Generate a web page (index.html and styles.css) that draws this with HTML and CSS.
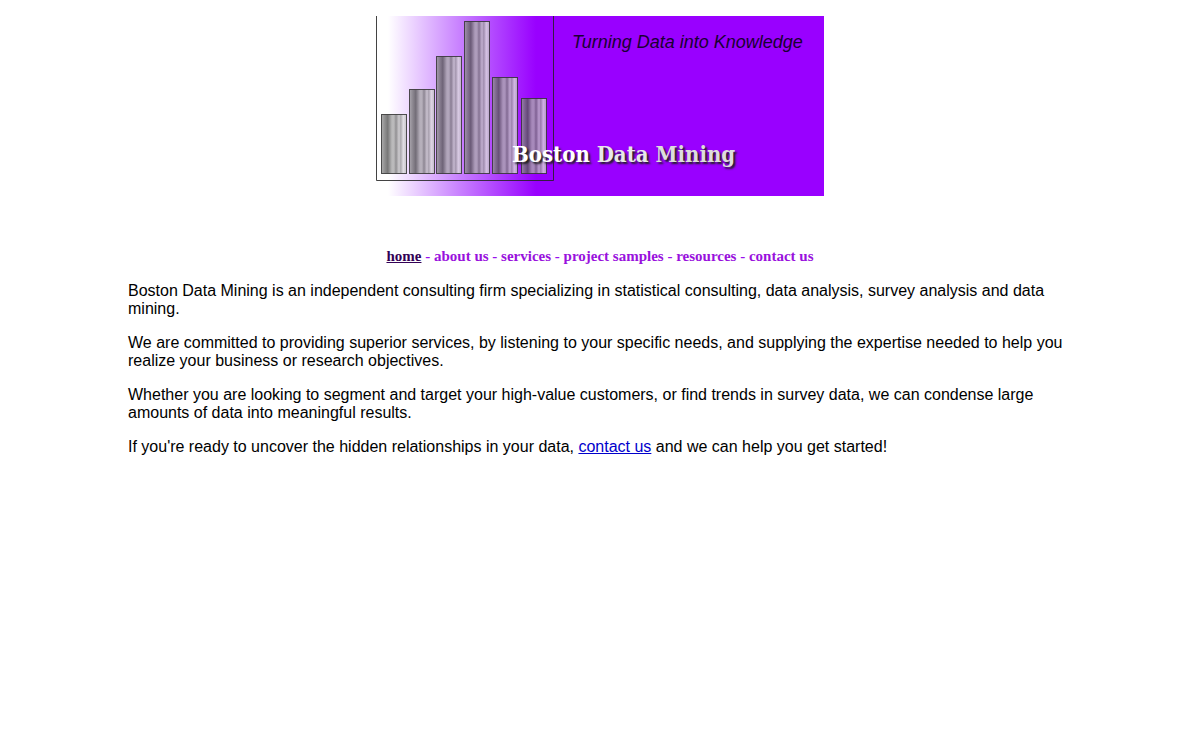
FILE: index.html
```
<!DOCTYPE html>
<html lang="en">
<head>
    <meta charset="utf-8">
    <title>Boston Data Mining</title>
    <link rel="stylesheet" href="styles.css">
</head>
<body>
    <header class="banner">
        <svg class="chart" width="178" height="180" viewBox="0 0 178 180" aria-hidden="true">
            <defs>
                <linearGradient id="metal">
                    <stop offset="0" stop-color="#999"/>
                    <stop offset="0.12" stop-color="#777"/>
                    <stop offset="0.25" stop-color="#555"/>
                    <stop offset="0.42" stop-color="#aaa"/>
                    <stop offset="0.5" stop-color="#aaa"/>
                    <stop offset="0.58" stop-color="#777"/>
                    <stop offset="0.7" stop-color="#c4c4c4"/>
                    <stop offset="0.77" stop-color="#999"/>
                    <stop offset="0.87" stop-color="#ddd"/>
                    <stop offset="1" stop-color="#bbb"/>
                </linearGradient>
            </defs>
            <path d="M0.5 0V164.5H177.5V0" fill="none" stroke="#222" stroke-opacity="0.85"/>
            <g fill="url(#metal)" fill-opacity="0.8" stroke="#333" stroke-opacity="0.85">
                <rect x="5.5" y="98.5" width="25" height="59"/>
                <rect x="33.5" y="73.5" width="25" height="84"/>
                <rect x="60.5" y="40.5" width="25" height="117"/>
                <rect x="88.5" y="5.5" width="25" height="152"/>
                <rect x="116.5" y="61.5" width="25" height="96"/>
                <rect x="145.5" y="82.5" width="25" height="75"/>
            </g>
        </svg>
        <p class="tagline">Turning Data into Knowledge</p>
        <h1 class="title"><span>Boston</span> <span class="silver">Data</span> <span class="grey">Mining</span></h1>
    </header>

    <nav class="menu">
        <a href="index.html" class="current">home</a> -
        <a href="about.html">about us</a> -
        <a href="services.html">services</a> -
        <a href="samples.html">project samples</a> -
        <a href="resources.html">resources</a> -
        <a href="contact.html">contact us</a>
    </nav>

    <main class="content">
        <p>Boston Data Mining is an independent consulting firm specializing in statistical consulting, data analysis, survey analysis and data mining.</p>
        <p>We are committed to providing superior services, by listening to your specific needs, and supplying the expertise needed to help you realize your business or research objectives.</p>
        <p>Whether you are looking to segment and target your high-value customers, or find trends in survey data, we can condense large amounts of data into meaningful results.</p>
        <p>If you're ready to uncover the hidden relationships in your data, <a href="contact.html">contact us</a> and we can help you get started!</p>
    </main>
</body>
</html>
```
FILE: styles.css
```
body {
    margin: 16px 8px;
    background: #fff;
    color: #000;
    font-family: "Liberation Sans", Arial, sans-serif;
    font-size: 16px;
    line-height: 18px;
}

.banner {
    position: relative;
    display: flex;
    flex-direction: column;
    justify-content: space-between;
    box-sizing: border-box;
    width: 448px;
    height: 180px;
    margin: 0 auto;
    padding: 16px 0 26px;
    background: linear-gradient(to right, #fff 12px, #e0b8ff 52px, #c880ff 84px, #aa33ff 130px, #9900ff 160px);
}

.chart {
    position: absolute;
    top: 0;
    left: 0;
}

.tagline {
    position: relative;
    margin: 0 0 0 196px;
    color: #1a0033;
    font-size: 18px;
    font-style: italic;
    line-height: 20px;
}

.title {
    position: relative;
    margin: 0 0 0 136px;
    color: #fff;
    font-family: "DejaVu Serif Condensed", "DejaVu Serif", serif;
    font-size: 22px;
    line-height: 32px;
    text-shadow: 2px 2px 2px #222;
}

.title .silver {
    color: #e8e8e8;
}

.title .grey {
    color: #ddd;
}

.menu {
    margin: 51px 0 17px;
    color: #9911ee;
    font-family: "Liberation Serif", "Times New Roman", serif;
    font-size: 15px;
    font-weight: bold;
    text-align: center;
}

.menu a {
    color: #9911dd;
    text-decoration: none;
}

.menu .current {
    color: #330055;
    text-decoration: underline;
}

.content {
    padding: 0 120px;
}

.content p {
    margin: 0 0 16px;
}

.content a {
    color: #0000cc;
}
```
